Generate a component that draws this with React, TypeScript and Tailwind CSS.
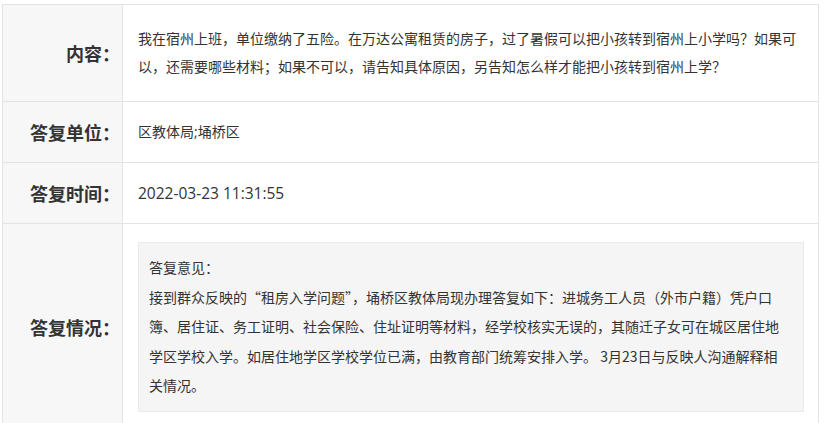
const font = {
  fontFamily: '"Open Sans", "Noto Sans CJK SC", sans-serif',
};

const cjk = { fontFamily: '"Noto Sans CJK SC", sans-serif' };

function Row({
  label,
  children,
  cellClass = "py-4",
}: {
  label: string;
  children: React.ReactNode;
  cellClass?: string;
}) {
  return (
    <div className="flex border-t border-[#e3e3e3]">
      <div
        className="w-[120px] shrink-0 bg-[#f7f7f7] border-r border-[#e3e3e3] flex items-center justify-end pr-[2px] text-[18px] font-bold text-[#333]"
        style={cjk}
      >
        {label}
      </div>
      <div className={`flex-1 min-w-0 px-[15px] text-[14px] leading-[28px] text-[#333] ${cellClass}`}>
        {children}
      </div>
    </div>
  );
}

export default function App() {
  return (
    <div className="w-[828px] h-[423px] overflow-hidden bg-white pt-[4px] pl-[2px]" style={font}>
      <div className="w-[817px] border-l border-r border-[#e3e3e3]">
        <Row label="内容：" cellClass="py-5">
          我在宿州上班，单位缴纳了五险。在万达公寓租赁的房子，过了暑假可以把小孩转到宿州上小学吗？如果可以，还需要哪些材料；如果不可以，请告知具体原因，另告知怎么样才能把小孩转到宿州上学？
        </Row>
        <Row label="答复单位：" cellClass="py-4">
          区教体局;埇桥区
        </Row>
        <Row label="答复时间：" cellClass="py-4">
          <div className="text-[15.5px] leading-[28px]">2022-03-23 11:31:55</div>
        </Row>
        <Row label="答复情况：" cellClass="pt-[18px] pb-5">
          <div
            className="bg-[#f5f5f5] border border-[#ebebeb] pl-[10px] pr-[16px] py-[10px] leading-[29.5px] mr-[-1px]"
            style={cjk}
          >
            <div>答复意见：</div>
            <div>
              接到群众反映的“租房入学问题”，埇桥区教体局现办理答复如下：进城务工人员（外市户籍）凭户口簿、居住证、务工证明、社会保险、住址证明等材料，经学校核实无误的，其随迁子女可在城区居住地学区学校入学。如居住地学区学校学位已满，由教育部门统筹安排入学。 3月23日与反映人沟通解释相关情况。
            </div>
          </div>
        </Row>
      </div>
    </div>
  );
}
